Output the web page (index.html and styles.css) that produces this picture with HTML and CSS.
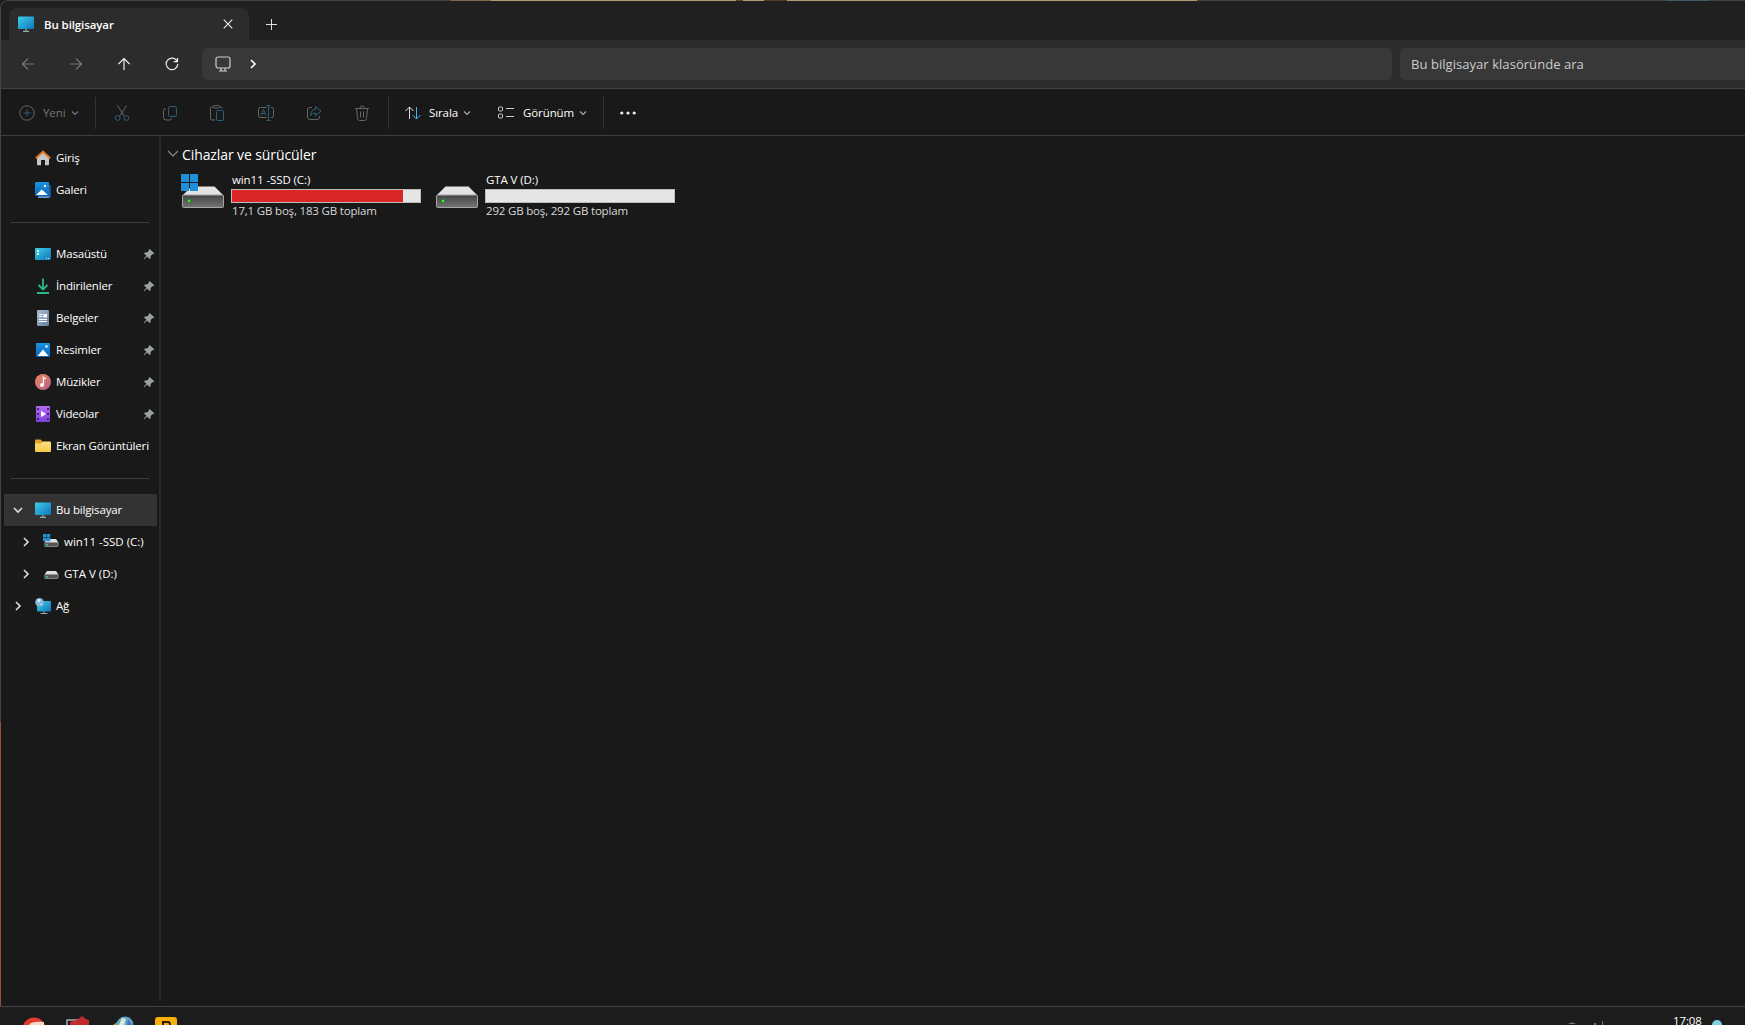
FILE: index.html
```
<!DOCTYPE html>
<html lang="tr">
<head>
  <meta charset="utf-8">
  <title>Bu bilgisayar</title>
  <link rel="stylesheet" href="styles.css">
</head>
<body>
  <!-- shared symbols -->
  <svg class="defs" width="0" height="0">
    <defs>
      <linearGradient id="screen" x1="0" y1="0" x2="1" y2="1">
        <stop offset="0" stop-color="#3ad0e6"/><stop offset="1" stop-color="#1173bd"/>
      </linearGradient>
      <linearGradient id="photo" x1="0" y1="0" x2="0" y2="1">
        <stop offset="0" stop-color="#1a94e2"/><stop offset="1" stop-color="#0b67b8"/>
      </linearGradient>
      <linearGradient id="steel" x1="0" y1="0" x2="0" y2="1">
        <stop offset="0" stop-color="#444"/><stop offset="1" stop-color="#747474"/>
      </linearGradient>
      <linearGradient id="page" x1="0" y1="0" x2="1" y2="1">
        <stop offset="0" stop-color="#a9bdd3"/><stop offset="1" stop-color="#647e9d"/>
      </linearGradient>
      <linearGradient id="music" x1="0" y1="0" x2="1" y2="1">
        <stop offset="0" stop-color="#ee8a5c"/><stop offset="1" stop-color="#b95b87"/>
      </linearGradient>
      <linearGradient id="video" x1="0" y1="0" x2="0" y2="1">
        <stop offset="0" stop-color="#b36cf0"/><stop offset="1" stop-color="#8040d8"/>
      </linearGradient>
      <linearGradient id="folder" x1="0" y1="0" x2="0" y2="1">
        <stop offset="0" stop-color="#ffe082"/><stop offset="1" stop-color="#f7c948"/>
      </linearGradient>
    </defs>
    <symbol id="pc" viewBox="0 0 16 16">
      <path d="M5 15.3h6M8 13v2" stroke="#9aa7ad" stroke-width="1.2"/>
      <rect x="0" y="0.5" width="16" height="12.5" rx="0.8" fill="url(#screen)"/>
    </symbol>
    <symbol id="pin" viewBox="0 0 12 12">
      <path d="M6.6.9l4.6 4.4-.8.9-.9-.1-1.9 2-.1 2.200-.9.7-2.400-2.400L1.200 11.200l-.5-.4 2.700-3L1 5.500l.8-.9 2.200-.1 2-2-.1-.9z" fill="#9aa3a6"/>
    </symbol>
    <symbol id="down" viewBox="0 0 8 8">
      <path d="M1 2.500l3 3 3-3" fill="none" stroke="currentColor" stroke-width="1.200"/>
    </symbol>
    <symbol id="expand" viewBox="0 0 10 10">
      <path d="M3 1l4 4-4 4" fill="none" stroke="currentColor" stroke-width="1.600"/>
    </symbol>
    <symbol id="drive" viewBox="0 0 42 22">
      <path d="M9.500 0.500h23l8.500 8.500h-40z" fill="#e3e3e5"/>
      <rect x="0.500" y="9" width="41" height="12.500" rx="1" fill="url(#steel)" stroke="#a5a5a5"/>
      <circle cx="7" cy="15" r="2.200" fill="#238c23"/><circle cx="7" cy="15" r="1.200" fill="#4fe04f"/>
    </symbol>
    <symbol id="smalldrive" viewBox="0 0 14 8">
      <path d="M2.500 0h9l2.500 3.500H0z" fill="#e0e0e0"/>
      <rect x="0.400" y="3.500" width="13.200" height="4.100" rx="0.500" fill="#555" stroke="#a0a0a0" stroke-width="0.800"/>
      <rect x="2" y="5" width="1.500" height="1.500" fill="#39d65a"/>
    </symbol>
    <symbol id="winlogo" viewBox="0 0 17 17">
      <path d="M0 0h8v8H0zM9 0h8v8H9zM0 9h8v8H0zM9 9h8v8H9z" fill="#1e90da"/>
    </symbol>
  </svg>

  <div class="window">
    <div class="tabs">
      <div class="tab">
        <svg class="tab-icon" width="16" height="16"><use href="#pc"/></svg>
        <span class="tab-title">Bu bilgisayar</span>
        <svg class="close" width="10" height="10" viewBox="0 0 10 10"><path d="M.7.700l8.600 8.600M9.300.700L.7 9.300" stroke="#e8e8e8" stroke-width="1.200"/></svg>
      </div>
      <svg class="plus" width="11" height="11" viewBox="0 0 11 11"><path d="M5.500 0v11M0 5.500h11" stroke="#e0e0e0"/></svg>
    </div>

    <div class="nav">
      <div class="nav-buttons">
        <svg class="off" width="14" height="14" viewBox="0 0 14 14"><path d="M13 7H1.500M7 1.500L1.500 7 7 12.500"/></svg>
        <svg class="off" width="14" height="14" viewBox="0 0 14 14"><path d="M1 7h11.500M7 1.500L12.500 7 7 12.500"/></svg>
        <svg width="14" height="14" viewBox="0 0 14 14"><path d="M7 13V1.500M1.500 7L7 1.500 12.500 7"/></svg>
        <svg width="14" height="14" viewBox="0 0 14 14"><path d="M12.300 4.500A5.800 5.800 0 1 0 12.800 7M12.500 1v3.700H8.800"/></svg>
      </div>
      <div class="address">
        <svg width="16" height="16" viewBox="0 0 16 16"><rect x="1" y="1" width="14" height="11" rx="2" fill="none" stroke="#d0d0d0" stroke-width="1.200"/><path d="M6 12v2.500M10 12v2.500M4 15h8" stroke="#d0d0d0" stroke-width="1.200"/></svg>
        <svg class="crumb" width="10" height="10"><use href="#expand"/></svg>
      </div>
      <div class="search">Bu bilgisayar klasöründe ara</div>
    </div>

    <div class="toolbar">
      <div class="tool new">
        <svg width="16" height="16" viewBox="0 0 16 16"><circle cx="8" cy="8" r="7.200" stroke="#666"/><path d="M8 4.500v7M4.500 8h7" stroke="#2d6078"/></svg>
        <span>Yeni</span>
        <svg class="chev" width="8" height="8"><use href="#down"/></svg>
      </div>
      <div class="edit">
        <svg width="16" height="16" viewBox="0 0 16 16"><path d="M3.500.5l6.700 10.500M12.500.5L5.800 11" stroke="#666"/><circle cx="3.700" cy="13" r="2.400" stroke="#2d6078"/><circle cx="12.300" cy="13" r="2.400" stroke="#2d6078"/></svg>
        <svg width="16" height="16" viewBox="0 0 16 16"><path d="M4 4H3Q1.500 4 1.500 5.500v7Q1.500 15 4 15h4q1.500 0 1.500-1.500" stroke="#666"/><rect x="6.500" y="1.500" width="8" height="10" rx="1.800" stroke="#2d6078"/></svg>
        <svg width="16" height="16" viewBox="0 0 16 16"><path d="M4.500 2H3Q1.500 2 1.500 3.500v10Q1.500 15 3 15h3M10.500 2H12q1 0 1.300 1.500" stroke="#666"/><rect x="4.500" y=".5" width="6" height="2.500" rx="1" stroke="#666"/><rect x="7.500" y="5.500" width="7" height="10" rx="1" stroke="#2d6078"/></svg>
        <svg width="18" height="16" viewBox="0 0 18 16"><path d="M9.500 2.500H3.500Q1.500 2.500 1.500 4.500v6q0 2 2 2h6M13.500 2.500h1q2 0 2 2v6q0 2-2 2h-1" stroke="#666"/><path d="M4 10.500l2.500-6 2.500 6M5 8.500h3M11.500.5v15M9.500.5h4M9.500 15.500h4" stroke="#2d6078"/></svg>
        <svg width="16" height="16" viewBox="0 0 16 16"><path d="M6 2.500H4Q1.500 2.500 1.500 5v7q0 2.500 2.500 2.500h7q2.500 0 2.500-2.500v-1" stroke="#666"/><path d="M9.500 1.500L15 6.200l-5.500 4.600V8Q6 8 4.500 10.500 5 4.500 9.500 4.300z" stroke="#2d6078"/></svg>
        <svg width="16" height="16" viewBox="0 0 16 16"><path d="M1 3.500h14M5.700 3.500Q6 .8 8 .8t2.300 2.700M2.500 3.500l1 10q.2 2 2 2h5q1.800 0 2-2l1-10M6.500 6.500v6M9.500 6.500v6" stroke="#666"/></svg>
      </div>
      <div class="tool sort">
        <svg width="16" height="14" viewBox="0 0 16 14"><path d="M4.500 13V1M.5 5l4-4 4 4" stroke="#ddd"/><path d="M11.500 1v12M7.500 9l4 4 4-4" stroke="#4cb4e7"/></svg>
        <span>Sırala</span>
        <svg class="chev" width="8" height="8"><use href="#down"/></svg>
      </div>
      <div class="tool view">
        <svg width="16" height="13" viewBox="0 0 16 13"><rect x=".5" y="1" width="4" height="4" rx="1" stroke="#ccc"/><rect x=".5" y="8" width="4" height="4" rx="1" stroke="#ccc"/><path d="M8 2.500h8M8 10.500h8" stroke="#ccc"/></svg>
        <span>Görünüm</span>
        <svg class="chev" width="8" height="8"><use href="#down"/></svg>
      </div>
      <svg class="more" width="16" height="4" viewBox="0 0 16 4"><g fill="#eee"><circle cx="1.800" cy="2" r="1.600"/><circle cx="8" cy="2" r="1.600"/><circle cx="14.200" cy="2" r="1.600"/></g></svg>
    </div>

    <div class="main">
      <div class="sidebar">
        <div class="item">
          <svg width="16" height="16" viewBox="0 0 16 16"><path d="M2 7l6-5.500L14 7v7.500q0 .8-.8.800H10V10H6v5.300H2.800Q2 15.300 2 14.500z" fill="#c9c5c2"/><path d="M.8 8.200L8 1.500l7.200 6.700" fill="none" stroke="#dc7623" stroke-width="2"/></svg>
          <span>Giriş</span>
        </div>
        <div class="item">
          <svg width="16" height="16" viewBox="0 0 16 16"><path d="M3 3h11.800q1 0 1 1v10.800q0 1-1 1H4z" fill="#1b5f9f"/><path d="M3 14.500h11V16H3z" fill="#6f9fd0"/><rect width="14" height="14" rx="1.200" fill="url(#photo)"/><path d="M1 13l5.800-5.600L12.800 13z" fill="#fff"/><circle cx="10" cy="4" r="1.200" fill="#e7f6ff"/></svg>
          <span>Galeri</span>
        </div>
        <div class="rule"></div>
        <div class="item">
          <svg width="16" height="16" viewBox="0 0 16 16"><rect y="2" width="16" height="12" rx="1" fill="url(#screen)"/><path d="M2 4h2v2H2zM2 7h2v2H2zM11 12h1v1h-1zM13 12h1v1h-1z" fill="#e8faff"/></svg>
          <span>Masaüstü</span>
          <svg class="pin" width="12" height="12"><use href="#pin"/></svg>
        </div>
        <div class="item">
          <svg width="16" height="16" viewBox="0 0 16 16"><path d="M8 .5V11M3.500 7L8 11.500 12.500 7M2 15h12" fill="none" stroke="#2bb58d" stroke-width="1.800"/></svg>
          <span>İndirilenler</span>
          <svg class="pin" width="12" height="12"><use href="#pin"/></svg>
        </div>
        <div class="item">
          <svg width="16" height="16" viewBox="0 0 16 16"><rect x="2" width="12" height="16" rx="1.200" fill="url(#page)"/><path d="M4 4.500h3.500M4 6.500h3.500M4 9.500h8M4 11.500h8" stroke="#fff"/><rect x="8.500" y="4" width="3.500" height="3.500" fill="#fff"/></svg>
          <span>Belgeler</span>
          <svg class="pin" width="12" height="12"><use href="#pin"/></svg>
        </div>
        <div class="item">
          <svg width="16" height="16" viewBox="0 0 16 16"><rect x="1" y="1" width="14" height="14" rx="1" fill="url(#photo)"/><path d="M2.500 14L8 7.500l5.500 6.500z" fill="#fff"/><circle cx="11.500" cy="4.500" r="1.300" fill="#d8f4ff"/></svg>
          <span>Resimler</span>
          <svg class="pin" width="12" height="12"><use href="#pin"/></svg>
        </div>
        <div class="item">
          <svg width="16" height="16" viewBox="0 0 16 16"><circle cx="8" cy="8" r="8" fill="url(#music)"/><circle cx="7" cy="11" r="2" fill="#fff"/><path d="M8.400 11V3.500L11 5" fill="none" stroke="#fff" stroke-width="1.300"/></svg>
          <span>Müzikler</span>
          <svg class="pin" width="12" height="12"><use href="#pin"/></svg>
        </div>
        <div class="item">
          <svg width="16" height="16" viewBox="0 0 16 16"><rect x="1" width="14" height="16" rx="1" fill="url(#video)"/><path d="M2 2h2v2H2zM2 7h2v2H2zM2 12h2v2H2zM12 2h2v2h-2zM12 7h2v2h-2zM12 12h2v2h-2z" fill="#46208a"/><path d="M6 4.800l5 3.200-5 3.200z" fill="#fff"/></svg>
          <span>Videolar</span>
          <svg class="pin" width="12" height="12"><use href="#pin"/></svg>
        </div>
        <div class="item">
          <svg width="16" height="16" viewBox="0 0 16 16"><path d="M0 2.500q0-1 1-1h4.500L8 4v3H0z" fill="#e0a526"/><path d="M0 5.500h6L8 3.500h7q1 0 1 1V13q0 1-1 1H1q-1 0-1-1z" fill="url(#folder)"/></svg>
          <span>Ekran Görüntüleri</span>
        </div>
        <div class="rule"></div>
        <div class="item tree selected">
          <svg class="arrow open" width="10" height="10"><use href="#expand"/></svg>
          <svg width="16" height="16"><use href="#pc"/></svg>
          <span>Bu bilgisayar</span>
        </div>
        <div class="item tree child">
          <svg class="arrow" width="10" height="10"><use href="#expand"/></svg>
          <svg width="16" height="16" viewBox="0 0 16 16"><use href="#smalldrive" x="1" y="5" width="15" height="8"/><use href="#winlogo" width="7.500" height="7.500"/></svg>
          <span>win11 -SSD (C:)</span>
        </div>
        <div class="item tree child">
          <svg class="arrow" width="10" height="10"><use href="#expand"/></svg>
          <svg width="16" height="16" viewBox="0 0 16 16"><use href="#smalldrive" x="1" y="5" width="15" height="8"/></svg>
          <span>GTA V (D:)</span>
        </div>
        <div class="item tree">
          <svg class="arrow" width="10" height="10"><use href="#expand"/></svg>
          <svg width="16" height="16" viewBox="0 0 16 16"><path d="M5.500 15.500h7M9 13v2" stroke="#9aa7ad"/><rect x="2" y="3" width="14" height="10.500" rx=".8" fill="url(#screen)"/><circle cx="4.500" cy="4.300" r="4.300" fill="#7db6d5"/><path d="M2 2q2-2 4 0L5 4 3 4.500zM5.500 5.500l2 .5-1.500 2z" fill="#d7e8ef"/></svg>
          <span>Ağ</span>
        </div>
      </div>

      <div class="content">
        <div class="group">
          <svg width="12" height="8" viewBox="0 0 12 8"><path d="M1 1l5 5 5-5" fill="none" stroke="#8c8c8c" stroke-width="1.100"/></svg>
          <span>Cihazlar ve sürücüler</span>
        </div>
        <div class="drives">
          <div class="drive">
            <svg width="43" height="35" viewBox="0 0 43 35"><use href="#drive" x="1" y="12" width="42" height="22"/><use href="#winlogo" width="17" height="17"/></svg>
            <div class="info">
              <div class="name">win11 -SSD (C:)</div>
              <div class="bar"><div class="fill" style="width: 90.7%"></div></div>
              <div class="free">17,1 GB boş, 183 GB toplam</div>
            </div>
          </div>
          <div class="drive">
            <svg width="43" height="35" viewBox="0 0 43 35"><use href="#drive" x="1" y="12" width="42" height="22"/></svg>
            <div class="info">
              <div class="name">GTA V (D:)</div>
              <div class="bar"></div>
              <div class="free">292 GB boş, 292 GB toplam</div>
            </div>
          </div>
        </div>
      </div>
    </div>
  </div>

  <div class="taskbar">
    <svg width="160" height="18" viewBox="0 0 160 18">
      <circle cx="11" cy="22" r="11.500" fill="#e23b2e"/><path d="M6 18q2-4 15-3v4H6z" fill="#f5d6c8"/>
      <path d="M44 18v-5h12" fill="none" stroke="#aaa" stroke-width="1.500"/><path d="M47 15l7-2 5-4 4 3 3 1v5H47z" fill="#c22a30"/>
      <path d="M90 18l7-5 3 5z" fill="#99a437"/><circle cx="102" cy="18" r="8.500" fill="#62a3cc"/><path d="M99 11l4 1-2 6h-5z" fill="#d8eecb"/><path d="M105 12l4 6h-5z" fill="#476dc4"/>
      <path d="M132 18v-5q0-3 3-3h16q3 0 3 3v5z" fill="#fbb003"/><path d="M140 18v-3h5q2 0 2 3" fill="none" stroke="#2a2108" stroke-width="2"/>
    </svg>
    <div class="tray">
      <svg width="38" height="18" viewBox="0 0 38 18"><path d="M0 17q4-3 8 0zM26 16h2v2h-2zM34 14h1v4h-1z" fill="#777"/></svg>
      <span class="clock">17:08</span>
      <svg width="10" height="18" viewBox="0 0 10 18"><circle cx="5" cy="18" r="5" fill="#82d2e3"/></svg>
    </div>
  </div>

  <div class="backdrop-top"></div>
  <div class="backdrop-top teal"></div>
  <div class="backdrop-left"></div>
</body>
</html>
```

FILE: styles.css
```
* {
  box-sizing: border-box;
}
body {
  margin: 0;
  width: 1745px;
  height: 1025px;
  overflow: hidden;
  position: relative;
  background: #1c1c1c;
  color: #fff;
  font-family: "Open Sans", "Noto Sans", sans-serif;
  font-size: 11.5px;
  letter-spacing: -0.1px;
}
svg {
  display: block;
  flex: none;
}
span {
  white-space: nowrap;
}
.defs {
  position: absolute;
}

.window {
  height: 1007px;
  border: 1px solid #444;
  border-right: 0;
  border-top-left-radius: 8px;
  background: #191919;
  overflow: hidden;
}

/* tab strip */
.tabs {
  height: 39px;
  padding: 7px 0 0 8px;
  background: #202020;
  display: flex;
}
.tab {
  width: 240px;
  height: 32px;
  padding: 0 16px 0 9px;
  border-radius: 8px 8px 0 0;
  background: #2c2c2c;
  display: flex;
  align-items: center;
}
.tab-title {
  margin-left: 10px;
  font-weight: 600;
}
.close {
  margin-left: auto;
}
.plus {
  margin: 11px 0 0 17px;
}

/* navigation row */
.nav {
  height: 49px;
  padding: 8px 0;
  border-bottom: 1px solid #424242;
  background: #2c2c2c;
  display: flex;
}
.nav-buttons {
  width: 201px;
  padding-left: 20px;
  display: flex;
  align-items: center;
  gap: 34px;
}
.nav-buttons svg {
  fill: none;
  stroke: #eee;
  stroke-width: 1.2;
}
.nav-buttons .off {
  stroke: #777;
}
.address {
  width: 1190px;
  height: 32px;
  padding-left: 13px;
  border-radius: 5px;
  background: #383838;
  display: flex;
  align-items: center;
}
.crumb {
  margin-left: 17px;
}
.search {
  flex: 1;
  height: 32px;
  margin-left: 8px;
  padding-left: 11px;
  border-radius: 5px 0 0 5px;
  background: #383838;
  color: #ccc;
  font-size: 13px;
  letter-spacing: 0.05px;
  line-height: 32px;
}

/* command bar */
.toolbar {
  height: 47px;
  padding-top: 1px;
  border-bottom: 1px solid #3c3c3c;
  display: flex;
  align-items: center;
}
.toolbar svg {
  fill: none;
}
.tool {
  height: 32px;
  display: flex;
  align-items: center;
}
.tool .chev {
  color: #aaa;
}
.new {
  width: 95px;
  padding-left: 18px;
  border-right: 1px solid #333;
  color: #777;
}
.new span {
  width: 28px;
  margin-left: 8px;
}
.new .chev {
  color: #777;
}
.edit {
  width: 293px;
  height: 32px;
  padding: 0 18px;
  border-right: 1px solid #333;
  display: flex;
  align-items: center;
  justify-content: space-between;
}
.sort {
  padding-left: 16px;
}
.sort span {
  width: 34px;
  margin-left: 8px;
}
.view {
  width: 133px;
  padding-left: 27px;
  border-right: 1px solid #333;
}
.view span {
  width: 56px;
  margin-left: 9px;
}
.more {
  margin-left: 16px;
}

/* panes */
.main {
  height: 870px;
  display: flex;
}
.sidebar {
  width: 160px;
  height: 865px;
  padding-top: 6px;
  border-right: 2px solid #2b2b2b;
}
.item {
  height: 32px;
  padding: 0 4px 0 34px;
  display: flex;
  align-items: center;
}
.item span {
  margin-left: 5px;
  padding-bottom: 2px;
  letter-spacing: -0.17px;
}
.pin {
  margin-left: auto;
}
.rule {
  height: 32px;
  margin: 0 10px 0 10px;
  display: flex;
  align-items: center;
}
.rule::before {
  content: "";
  flex: 1;
  height: 1px;
  background: #3d3d3d;
}
.tree {
  margin: 0 2px 0 3px;
  padding-left: 9px;
}
.arrow {
  margin-right: 12px;
  color: #ddd;
}
.open {
  transform: rotate(90deg);
}
.selected {
  background: #333;
}
.child {
  padding-left: 17px;
}
.child span {
  letter-spacing: 0;
}

.content {
  flex: 1;
  padding: 7px 0 0 6px;
}
.group {
  height: 22px;
  display: flex;
  align-items: center;
  font-size: 14px;
}
.group span {
  margin-left: 3px;
}
.drives {
  padding: 5px 0 0 14px;
  display: flex;
}
.drive {
  width: 254px;
  display: flex;
}
.drive > svg {
  margin-top: 4px;
}
.info {
  width: 190px;
  margin-left: 7px;
  padding-top: 1px;
  line-height: 18px;
}
.name,
.free {
  height: 18px;
  padding-left: 1px;
  white-space: nowrap;
}
.free {
  margin-top: -1px;
  color: #d8d8d8;
  letter-spacing: -0.18px;
}
.bar {
  height: 14px;
  border: 1px solid #bcbcbc;
  background: #e6e6e6;
}
.fill {
  height: 12px;
  background: #da2626;
}

/* bottom of the desktop */
.taskbar {
  height: 18px;
  padding-left: 23px;
  background: #1c1c1c;
  display: flex;
  justify-content: space-between;
  overflow: hidden;
}
.tray {
  width: 177px;
  display: flex;
}
.clock {
  width: 39px;
  margin: 6px 0 0 67px;
  line-height: 16px;
}

/* slivers of the desktop around the window */
.backdrop-top {
  position: absolute;
  top: 0;
  left: 451px;
  width: 746px;
  height: 1px;
  background: linear-gradient(90deg, #80664c 0 40px, #b59a72 40px 285px, #654437 285px 292px, #b59a72 292px 313px, #54392f 313px 336px, #b59a72 336px);
}
.teal {
  left: 1666px;
  width: 42px;
  background: #3f5f66;
}
.backdrop-left {
  position: absolute;
  top: 722px;
  left: 0;
  width: 1px;
  height: 284px;
  background: #9d4c43;
}
```
